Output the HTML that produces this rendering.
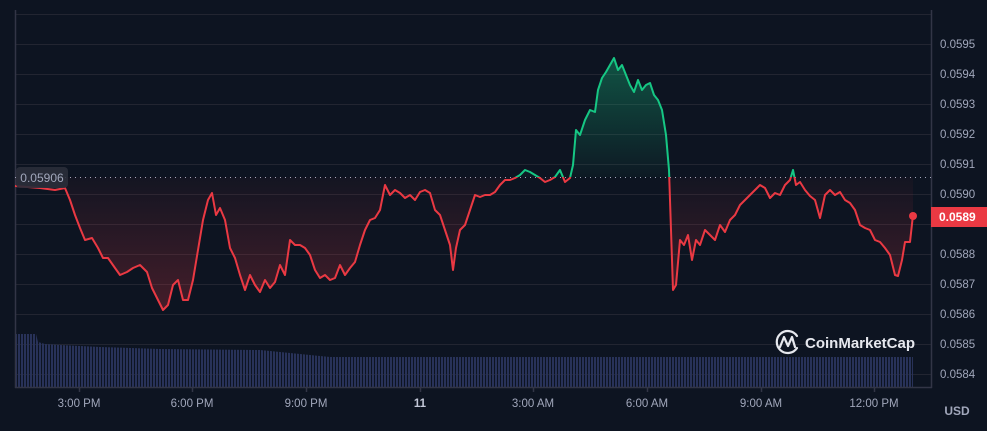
<!DOCTYPE html>
<html><head><meta charset="utf-8"><style>
html,body{margin:0;padding:0;background:#0d1421;width:987px;height:431px;overflow:hidden}
svg{display:block}
text{font-family:"Liberation Sans",sans-serif}
</style></head><body>
<svg width="987" height="431" viewBox="0 0 987 431">
<defs>
<pattern id="bars" x="15" y="0" width="3" height="10" patternUnits="userSpaceOnUse"><rect x="0" y="0" width="2" height="10" fill="#283259"/></pattern>
<linearGradient id="gg" x1="0" y1="60" x2="0" y2="177" gradientUnits="userSpaceOnUse"><stop offset="0" stop-color="#16c784" stop-opacity="0.35"/><stop offset="1" stop-color="#16c784" stop-opacity="0.03"/></linearGradient>
<linearGradient id="rg" x1="0" y1="177" x2="0" y2="310" gradientUnits="userSpaceOnUse"><stop offset="0" stop-color="#ea3943" stop-opacity="0.03"/><stop offset="1" stop-color="#ea3943" stop-opacity="0.25"/></linearGradient>
<clipPath id="above"><rect x="0" y="0" width="987" height="177"/></clipPath>
<clipPath id="below"><rect x="0" y="177" width="987" height="254"/></clipPath>
<polygon id="area" points="15,177 15,186 40,188 55,190 65,188 70,200 75,215 80,228 85,240 92,238 98,248 103,258 108,258 115,268 120,275 127,272 133,268 140,265 147,272 152,288 158,300 163,310 168,305 173,285 178,280 183,300 188,300 193,280 198,250 203,220 208,200 212,193 216,215 220,208 225,220 230,248 235,258 240,275 245,290 250,275 255,285 260,292 265,280 270,288 275,282 280,265 285,275 290,240 295,245 300,245 305,248 310,255 315,270 320,278 325,275 330,280 335,278 340,265 345,275 350,268 355,262 360,245 365,230 370,220 375,218 380,210 385,185 390,195 395,190 400,193 405,198 410,195 415,200 420,192 425,190 430,193 435,210 440,215 445,230 450,245 453,270 456,248 460,230 465,225 470,210 475,195 480,197 485,195 490,195 495,192 500,185 505,180 510,180 515,178 520,175 525,170 530,172 535,175 540,178 545,182 550,180 555,177 560,170 565,182 570,178 573,165 576,130 580,135 585,120 590,110 595,112 598,90 602,78 606,72 610,65 614,58 618,70 622,65 626,75 630,85 634,92 638,80 642,90 646,85 650,83 654,95 658,100 662,110 666,135 669,170 671,230 673,290 676,285 680,240 684,245 688,235 692,260 696,240 700,245 705,230 710,235 715,240 720,225 725,232 730,220 735,215 740,205 745,200 750,195 755,190 760,185 765,188 770,198 775,193 780,195 785,185 790,180 793,170 796,185 800,182 805,190 810,196 815,200 820,218 825,195 830,190 835,195 840,192 845,200 850,203 855,210 860,225 865,228 870,230 875,240 880,242 885,248 890,255 895,275 898,276 902,260 905,242 910,242 913,215 913,177"/>
<polyline id="ln" fill="none" stroke-width="2" stroke-linejoin="round" points="15,186 40,188 55,190 65,188 70,200 75,215 80,228 85,240 92,238 98,248 103,258 108,258 115,268 120,275 127,272 133,268 140,265 147,272 152,288 158,300 163,310 168,305 173,285 178,280 183,300 188,300 193,280 198,250 203,220 208,200 212,193 216,215 220,208 225,220 230,248 235,258 240,275 245,290 250,275 255,285 260,292 265,280 270,288 275,282 280,265 285,275 290,240 295,245 300,245 305,248 310,255 315,270 320,278 325,275 330,280 335,278 340,265 345,275 350,268 355,262 360,245 365,230 370,220 375,218 380,210 385,185 390,195 395,190 400,193 405,198 410,195 415,200 420,192 425,190 430,193 435,210 440,215 445,230 450,245 453,270 456,248 460,230 465,225 470,210 475,195 480,197 485,195 490,195 495,192 500,185 505,180 510,180 515,178 520,175 525,170 530,172 535,175 540,178 545,182 550,180 555,177 560,170 565,182 570,178 573,165 576,130 580,135 585,120 590,110 595,112 598,90 602,78 606,72 610,65 614,58 618,70 622,65 626,75 630,85 634,92 638,80 642,90 646,85 650,83 654,95 658,100 662,110 666,135 669,170 671,230 673,290 676,285 680,240 684,245 688,235 692,260 696,240 700,245 705,230 710,235 715,240 720,225 725,232 730,220 735,215 740,205 745,200 750,195 755,190 760,185 765,188 770,198 775,193 780,195 785,185 790,180 793,170 796,185 800,182 805,190 810,196 815,200 820,218 825,195 830,190 835,195 840,192 845,200 850,203 855,210 860,225 865,228 870,230 875,240 880,242 885,248 890,255 895,275 898,276 902,260 905,242 910,242 913,215"/>
</defs>
<g stroke="#222531" stroke-width="1">
<line x1="15" y1="14.5" x2="931" y2="14.5"/>
<line x1="15" y1="44.5" x2="931" y2="44.5"/><line x1="15" y1="74.5" x2="931" y2="74.5"/><line x1="15" y1="104.5" x2="931" y2="104.5"/><line x1="15" y1="134.5" x2="931" y2="134.5"/><line x1="15" y1="164.5" x2="931" y2="164.5"/><line x1="15" y1="194.5" x2="931" y2="194.5"/><line x1="15" y1="224.5" x2="931" y2="224.5"/><line x1="15" y1="254.5" x2="931" y2="254.5"/><line x1="15" y1="284.5" x2="931" y2="284.5"/><line x1="15" y1="314.5" x2="931" y2="314.5"/><line x1="15" y1="344.5" x2="931" y2="344.5"/><line x1="15" y1="374.5" x2="931" y2="374.5"/>
</g>
<polygon fill="url(#bars)" points="15,334 36,334 38,342 45,344 60,345 100,347 160,349 260,350 300,354 330,357 913,357 913,387 15,387"/>
<g stroke="#323546" stroke-width="1.5">
<line x1="15.5" y1="10" x2="15.5" y2="388"/>
<line x1="931.5" y1="10" x2="931.5" y2="388"/>
<line x1="15" y1="387.5" x2="932" y2="387.5"/>
<line x1="79.5" y1="388" x2="79.5" y2="392"/><line x1="192.5" y1="388" x2="192.5" y2="392"/><line x1="306.5" y1="388" x2="306.5" y2="392"/><line x1="420.5" y1="388" x2="420.5" y2="392"/><line x1="533.5" y1="388" x2="533.5" y2="392"/><line x1="647.5" y1="388" x2="647.5" y2="392"/><line x1="761.5" y1="388" x2="761.5" y2="392"/><line x1="874.5" y1="388" x2="874.5" y2="392"/>
</g>
<line x1="15" y1="177.5" x2="931" y2="177.5" stroke="#a1a7bb" stroke-width="1" stroke-dasharray="1,4"/>
<g clip-path="url(#below)"><use href="#area" fill="url(#rg)"/></g>
<g clip-path="url(#above)"><use href="#area" fill="url(#gg)"/></g>
<g clip-path="url(#below)"><use href="#ln" stroke="#ea3943"/></g>
<g clip-path="url(#above)"><use href="#ln" stroke="#16c784"/></g>
<circle cx="913" cy="216" r="4" fill="#ea3943"/>
<rect x="16" y="167" width="52" height="21" rx="4" fill="#2a2d3a" opacity="0.9"/>
<text x="42" y="182" font-size="12" fill="#a1a7bb" text-anchor="middle">0.05906</text>
<g font-size="11.5" fill="#a1a7bb">
<text x="940" y="48">0.0595</text><text x="940" y="78">0.0594</text><text x="940" y="108">0.0593</text><text x="940" y="138">0.0592</text><text x="940" y="168">0.0591</text><text x="940" y="198">0.0590</text><text x="940" y="258">0.0588</text><text x="940" y="288">0.0587</text><text x="940" y="318">0.0586</text><text x="940" y="348">0.0585</text><text x="940" y="378">0.0584</text>
</g>
<rect x="931" y="207" width="56" height="20" fill="#ea3943"/>
<text x="939" y="221" font-size="12" font-weight="bold" fill="#fff">0.0589</text>
<g font-size="11.5" fill="#a1a7bb" text-anchor="middle">
<text x="79" y="407">3:00 PM</text><text x="192" y="407">6:00 PM</text><text x="306" y="407">9:00 PM</text><text x="420" y="407" font-weight="bold" fill="#c3c8d8">11</text><text x="533" y="407">3:00 AM</text><text x="647" y="407">6:00 AM</text><text x="761" y="407">9:00 AM</text><text x="874" y="407">12:00 PM</text>
</g>
<text x="957" y="415" font-size="12" font-weight="bold" fill="#a1a7bb" text-anchor="middle">USD</text>
<g stroke="#e6e8ee" stroke-width="2.2" fill="none" stroke-linecap="round" stroke-linejoin="round">
<path d="M797 348 A11 11 0 1 1 797 336"/>
<path d="M780 347 L784 337 L788 346 L792 337 L795 347"/>
</g>
<text x="805" y="348" font-size="15" font-weight="bold" fill="#e6e8ee">CoinMarketCap</text>
</svg>
</body></html>
